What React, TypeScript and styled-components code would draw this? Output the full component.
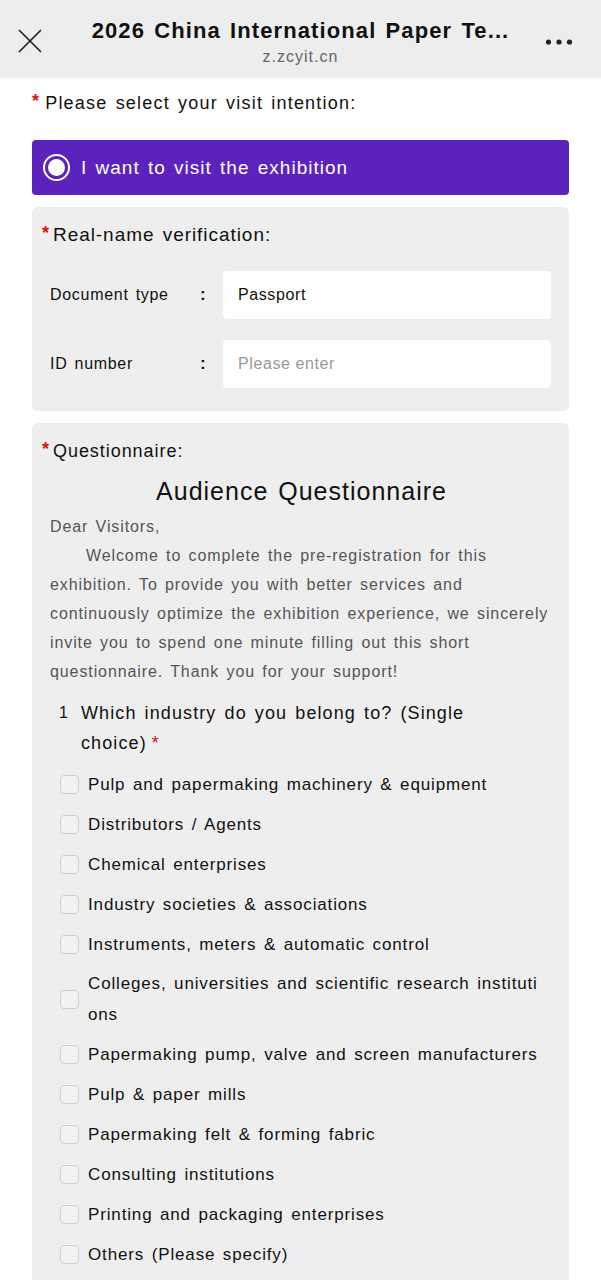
import React from "react";
import styled, { createGlobalStyle } from "styled-components";

const Global = createGlobalStyle`
  html, body { margin: 0; padding: 0; background: #ffffff; }
  body { font-family: "Liberation Sans", Arial, sans-serif; color: #111; }
  * { box-sizing: border-box; }
`;

const Page = styled.div`
  width: 601px;
  min-height: 1280px;
  background: #fff;
`;

const TopBar = styled.header`
  height: 78px;
  background: #ededed;
  display: grid;
  grid-template-columns: 60px 1fr 60px;
  align-items: center;
`;

const CloseBtn = styled.div`
  display: flex;
  align-items: center;
  justify-content: center;
  height: 100%;
  padding-top: 4px;
`;

const MoreBtn = styled.div`
  display: flex;
  align-items: center;
  justify-content: flex-start;
  padding-left: 4px;
  height: 100%;
  padding-top: 6px;
`;

const TitleBlock = styled.div`
  display: flex;
  flex-direction: column;
  align-items: center;
  padding-top: 6px;
  min-width: 0;
`;

const Title = styled.div`
  font-size: 22px;
  font-weight: 700;
  color: #111;
  letter-spacing: 1.1px;
  word-spacing: 2px;
  white-space: nowrap;
`;

const SubTitle = styled.div`
  font-size: 16px;
  color: #666;
  margin-top: 4px;
  letter-spacing: 1px;
`;

const Content = styled.main`
  padding: 12px 32px 0 32px;
  display: flex;
  flex-direction: column;
`;

const Req = styled.span<{ $gap?: number }>`
  color: #e01010;
  font-size: 18px;
  font-weight: 700;
  margin-right: ${(p) => p.$gap ?? 1}px;
  position: relative;
  top: -2px;
`;

const Heading = styled.div`
  font-size: 18px;
  color: #111;
  letter-spacing: 1.2px;
  word-spacing: 2px;
  line-height: 26px;
  margin-bottom: 24px;
`;

const IntentBtn = styled.div`
  height: 55px;
  background: #5b22bd;
  border-radius: 4px;
  display: flex;
  align-items: center;
  padding-left: 11px;
  gap: 11px;
  color: #fff;
  font-size: 19px;
  letter-spacing: 1px;
  word-spacing: 2px;
`;

const Radio = styled.div`
  width: 27px;
  height: 27px;
  border-radius: 50%;
  border: 2px solid #fff;
  display: flex;
  align-items: center;
  justify-content: center;
  &::after {
    content: "";
    width: 17px;
    height: 17px;
    border-radius: 50%;
    background: #fff;
  }
`;

const Card = styled.section`
  background: #eeeeee;
  border-radius: 6px;
  margin-top: 12px;
  padding: 14px 14px 23px 10px;
`;

const CardTitle = styled.div<{ $size?: number }>`
  font-size: ${(p) => p.$size ?? 19}px;
  line-height: 28px;
  color: #111;
  letter-spacing: 0.95px;
  word-spacing: 2px;
`;

const Rows = styled.div`
  display: flex;
  flex-direction: column;
  gap: 21px;
  margin-top: 22px;
  padding-right: 4px;
`;

const FieldRow = styled.div`
  display: grid;
  grid-template-columns: 8px 150px 23px 1fr;
  align-items: center;
`;

const FieldLabel = styled.div`
  grid-column: 2;
  font-size: 16px;
  color: #111;
  letter-spacing: 0.7px;
  word-spacing: 2px;
`;

const Colon = styled.div`
  font-size: 17px;
  font-weight: 700;
`;

const Input = styled.div<{ $placeholder?: boolean }>`
  height: 48px;
  background: #fff;
  border-radius: 4px;
  display: flex;
  align-items: center;
  padding-left: 15px;
  font-size: 16px;
  letter-spacing: 0.6px;
  color: ${(p) => (p.$placeholder ? "#999" : "#111")};
`;

const QTitle = styled.h2`
  margin: 12px 0 0;
  text-align: center;
  font-size: 25px;
  font-weight: 400;
  color: #111;
  letter-spacing: 1px;
  word-spacing: 2px;
  padding-left: 10px;
  padding-right: 4px;
`;

const Intro = styled.div`
  padding-left: 8px;
  margin-top: 6px;
  font-size: 16px;
  line-height: 29px;
  color: #555;
  letter-spacing: 0.9px;
  word-spacing: 2px;
`;

const Indent = styled.span`
  display: inline-block;
  width: 36px;
`;

const Question = styled.div`
  display: flex;
  gap: 12px;
  padding-left: 17px;
  margin-top: 12px;
  font-size: 18px;
  line-height: 30px;
  color: #111;
  letter-spacing: 1.1px;
  word-spacing: 2px;
`;

const QText = styled.span`
  max-width: 405px;
  &::after {
    content: "*";
    color: #e01010;
    margin-left: 5px;
  }
`;

const QNum = styled.span`
  font-size: 16px;
`;

const Options = styled.div`
  display: flex;
  flex-direction: column;
  margin-top: 6px;
  padding-left: 18px;
  padding-right: 9px;
`;

const Option = styled.label`
  display: flex;
  align-items: center;
  gap: 9px;
  min-height: 40px;
  padding: 4px 0;
`;

const Box = styled.span`
  flex: none;
  width: 19px;
  height: 19px;
  border: 1px solid #cfcfcf;
  border-radius: 4px;
  background: #f2f2f2;
`;

const OptText = styled.span`
  font-size: 17px;
  line-height: 31px;
  color: #111;
  letter-spacing: 0.85px;
  word-spacing: 2px;
  word-break: break-all;
`;

const options = [
  "Pulp and papermaking machinery & equipment",
  "Distributors / Agents",
  "Chemical enterprises",
  "Industry societies & associations",
  "Instruments, meters & automatic control",
  "Colleges, universities and scientific research institutions",
  "Papermaking pump, valve and screen manufacturers",
  "Pulp & paper mills",
  "Papermaking felt & forming fabric",
  "Consulting institutions",
  "Printing and packaging enterprises",
  "Others (Please specify)",
];

export default function App() {
  return (
    <Page>
      <Global />
      <TopBar>
        <CloseBtn>
          <svg width="24" height="24" viewBox="0 0 24 24" fill="none" stroke="#222" strokeWidth="1.7" strokeLinecap="round">
            <path d="M1.5 1.5 L22.5 22.5 M22.5 1.5 L1.5 22.5" />
          </svg>
        </CloseBtn>
        <TitleBlock>
          <Title>2026 China International Paper Te...</Title>
          <SubTitle>z.zcyit.cn</SubTitle>
        </TitleBlock>
        <MoreBtn>
          <svg width="28" height="8" viewBox="0 0 28 8" fill="#222">
            <circle cx="3.5" cy="4" r="2.6" />
            <circle cx="14" cy="4" r="2.6" />
            <circle cx="24.5" cy="4" r="2.6" />
          </svg>
        </MoreBtn>
      </TopBar>
      <Content>
        <Heading>
          <Req $gap={5}>*</Req>Please select your visit intention:
        </Heading>
        <IntentBtn>
          <Radio />
          I want to visit the exhibition
        </IntentBtn>
        <Card>
          <CardTitle>
            <Req $gap={3}>*</Req>Real-name verification:
          </CardTitle>
          <Rows>
            <FieldRow>
              <FieldLabel>Document type</FieldLabel>
              <Colon>:</Colon>
              <Input>Passport</Input>
            </FieldRow>
            <FieldRow>
              <FieldLabel>ID number</FieldLabel>
              <Colon>:</Colon>
              <Input $placeholder>Please enter</Input>
            </FieldRow>
          </Rows>
        </Card>
        <Card>
          <CardTitle $size={18}>
            <Req $gap={3}>*</Req>Questionnaire:
          </CardTitle>
          <QTitle>Audience Questionnaire</QTitle>
          <Intro>
            Dear Visitors,
            <br />
            <Indent />
            Welcome to complete the pre-registration for this exhibition. To provide you with better services and continuously optimize the exhibition experience, we sincerely invite you to spend one minute filling out this short questionnaire. Thank you for your support!
          </Intro>
          <Question>
            <QNum>1</QNum>
            <QText>Which industry do you belong to? (Single choice)</QText>
          </Question>
          <Options>
            {options.map((o) => (
              <Option key={o}>
                <Box />
                <OptText>{o}</OptText>
              </Option>
            ))}
          </Options>
        </Card>
      </Content>
    </Page>
  );
}
